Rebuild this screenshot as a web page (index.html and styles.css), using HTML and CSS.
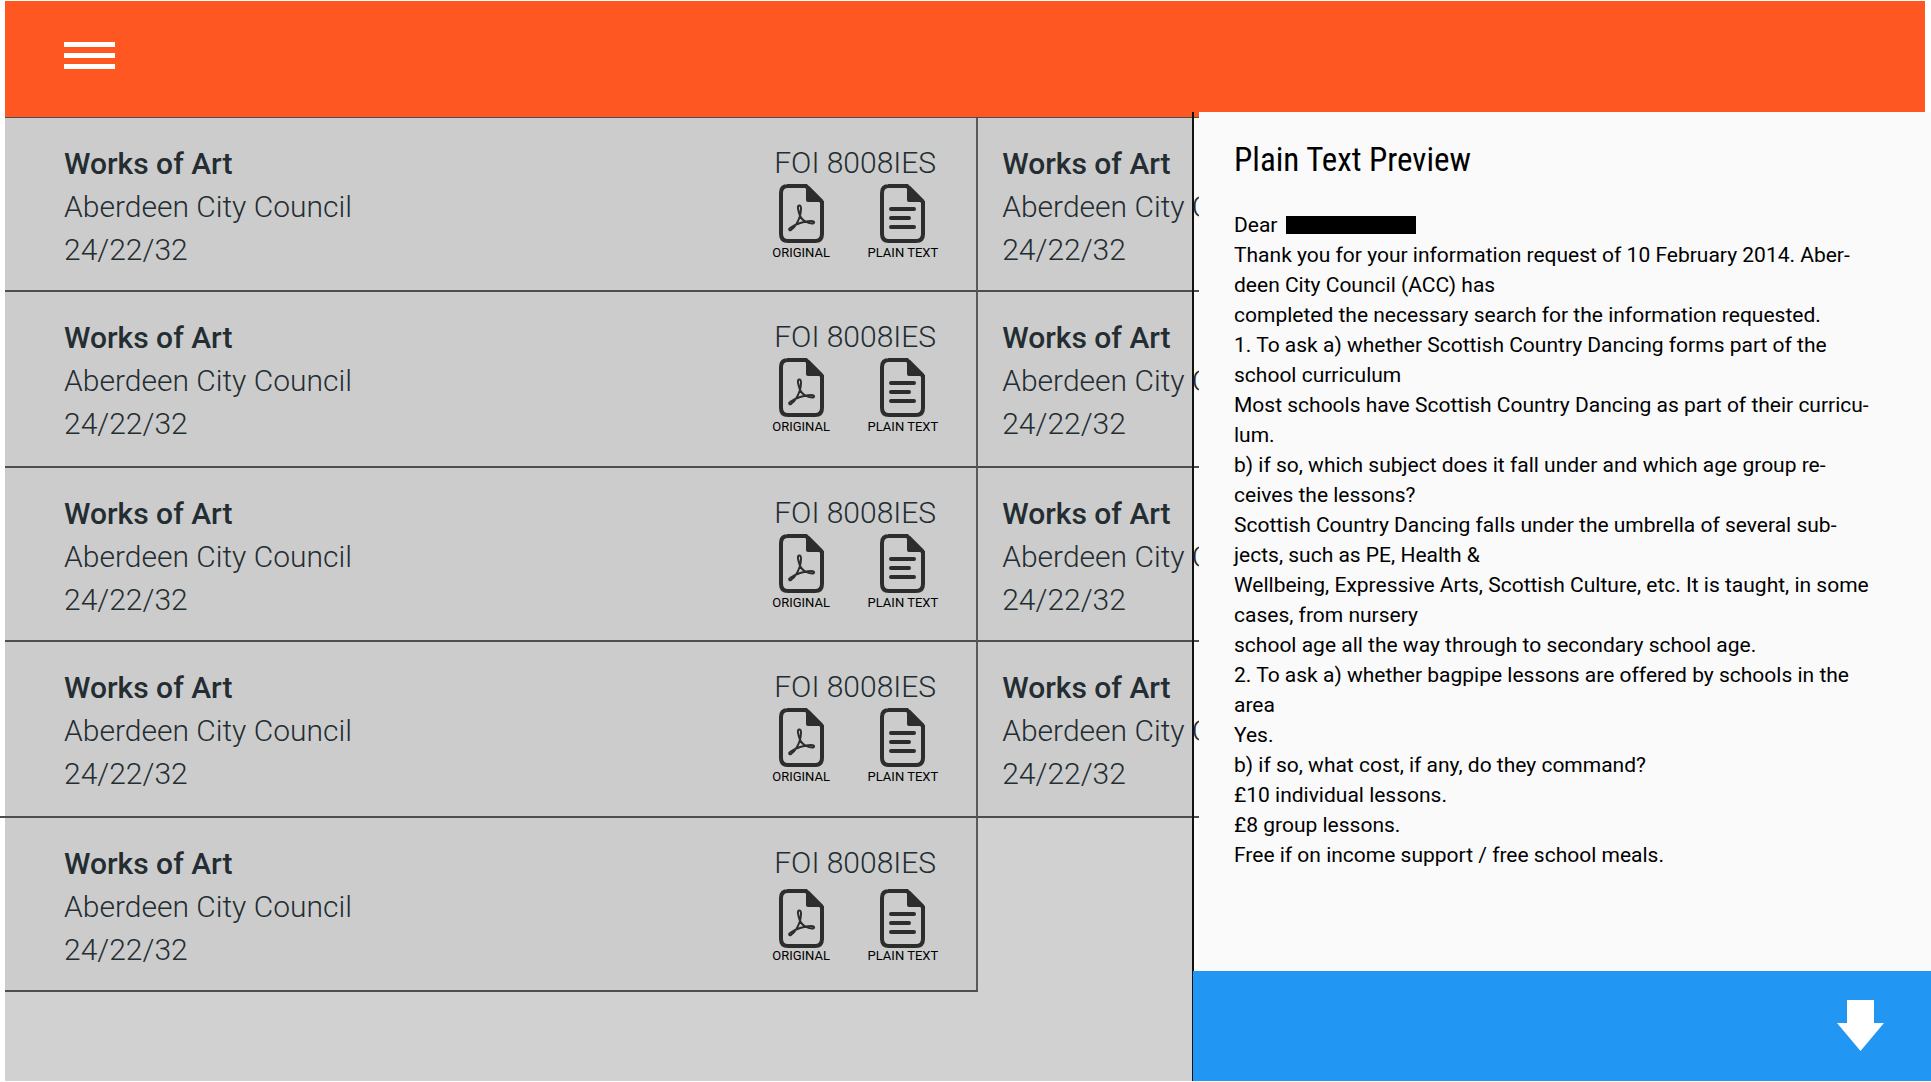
FILE: index.html
```
<!DOCTYPE html>
<html lang="en">
<head>
<meta charset="utf-8">
<title>Plain Text Preview</title>
<link rel="stylesheet" href="styles.css">
</head>
<body>
<svg class="sprite" aria-hidden="true">
  <symbol id="page" viewBox="0 0 45 59">
    <path d="M8 2H27L43 18V50Q43 57 36 57H9Q2 57 2 50V9Q2 2 9 2Z" fill="none" stroke="currentColor" stroke-width="4"/>
    <path d="M27 2H30L44 16V18H29Q27 18 27 16Z" fill="currentColor"/>
  </symbol>
  <symbol id="pdf" viewBox="0 0 45 59">
    <use href="#page"/>
    <path d="M21 32C19 26 18 22 20 21.500C23 21 22 27 21 32C19 38 15 44 12 46C10 47 9.500 45 11 44C16 40 26 37 32 37C36 37 36 39.500 33 39.500C28 39.500 23 36 21 32Z" fill="none" stroke="currentColor" stroke-width="2"/>
  </symbol>
  <symbol id="text" viewBox="0 0 45 59">
    <use href="#page"/>
    <path d="M11 25H34M11 34H29M11 43H34" fill="none" stroke="currentColor" stroke-width="4" stroke-linecap="round"/>
  </symbol>
</svg>
<div class="app">
  <header class="topbar">
    <button class="menu" type="button" aria-label="Menu"><span></span><span></span><span></span></button>
  </header>
  <main class="catalogue">
    <article class="record">
      <div class="info"><h2>Works of Art</h2><p>Aberdeen City Council</p><p>24/22/32</p></div>
      <div class="meta"><p class="ref">FOI 8008IES</p><div class="files">
        <a href="#original"><svg><use href="#pdf"/></svg>ORIGINAL</a>
        <a href="#plain"><svg><use href="#text"/></svg>PLAIN TEXT</a></div></div>
    </article>
    <article class="record"><div class="info"><h2>Works of Art</h2><p>Aberdeen City Council</p><p>24/22/32</p></div></article>
    <article class="record">
      <div class="info"><h2>Works of Art</h2><p>Aberdeen City Council</p><p>24/22/32</p></div>
      <div class="meta"><p class="ref">FOI 8008IES</p><div class="files">
        <a href="#original"><svg><use href="#pdf"/></svg>ORIGINAL</a>
        <a href="#plain"><svg><use href="#text"/></svg>PLAIN TEXT</a></div></div>
    </article>
    <article class="record"><div class="info"><h2>Works of Art</h2><p>Aberdeen City Council</p><p>24/22/32</p></div></article>
    <article class="record">
      <div class="info"><h2>Works of Art</h2><p>Aberdeen City Council</p><p>24/22/32</p></div>
      <div class="meta"><p class="ref">FOI 8008IES</p><div class="files">
        <a href="#original"><svg><use href="#pdf"/></svg>ORIGINAL</a>
        <a href="#plain"><svg><use href="#text"/></svg>PLAIN TEXT</a></div></div>
    </article>
    <article class="record"><div class="info"><h2>Works of Art</h2><p>Aberdeen City Council</p><p>24/22/32</p></div></article>
    <article class="record bleed">
      <div class="info"><h2>Works of Art</h2><p>Aberdeen City Council</p><p>24/22/32</p></div>
      <div class="meta"><p class="ref">FOI 8008IES</p><div class="files">
        <a href="#original"><svg><use href="#pdf"/></svg>ORIGINAL</a>
        <a href="#plain"><svg><use href="#text"/></svg>PLAIN TEXT</a></div></div>
    </article>
    <article class="record"><div class="info"><h2>Works of Art</h2><p>Aberdeen City Council</p><p>24/22/32</p></div></article>
    <article class="record last">
      <div class="info"><h2>Works of Art</h2><p>Aberdeen City Council</p><p>24/22/32</p></div>
      <div class="meta"><p class="ref">FOI 8008IES</p><div class="files">
        <a href="#original"><svg><use href="#pdf"/></svg>ORIGINAL</a>
        <a href="#plain"><svg><use href="#text"/></svg>PLAIN TEXT</a></div></div>
    </article>
  </main>
  <div class="scrim"></div>
  <aside class="drawer">
    <section class="preview">
      <h1>Plain Text Preview</h1>
      <p>Dear <span class="redacted"></span></p>
      <p>Thank you for your information request of 10 February 2014. Aber-<br>deen City Council (ACC) has</p>
      <p>completed the necessary search for the information requested.</p>
      <p>1. To ask a) whether Scottish Country Dancing forms part of the<br>school curriculum</p>
      <p>Most schools have Scottish Country Dancing as part of their curricu-<br>lum.</p>
      <p>b) if so, which subject does it fall under and which age group re-<br>ceives the lessons?</p>
      <p>Scottish Country Dancing falls under the umbrella of several sub-<br>jects, such as PE, Health &amp;</p>
      <p>Wellbeing, Expressive Arts, Scottish Culture, etc. It is taught, in some<br>cases, from nursery</p>
      <p>school age all the way through to secondary school age.</p>
      <p>2. To ask a) whether bagpipe lessons are offered by schools in the<br>area</p>
      <p>Yes.</p>
      <p>b) if so, what cost, if any, do they command?</p>
      <p>£10 individual lessons.</p>
      <p>£8 group lessons.</p>
      <p>Free if on income support / free school meals.</p>
    </section>
    <footer class="actions">
      <button class="download" type="button" aria-label="Download">
        <svg width="47" height="51" viewBox="0 0 47 51"><path d="M10 0H37V23H47L23.500 51L0 23H10Z" fill="#fff"/></svg>
      </button>
    </footer>
  </aside>
</div>
</body>
</html>
```
FILE: styles.css
```
* { box-sizing: border-box; }
body { margin: 0; background: #fff; font-family: Roboto, "Liberation Sans", sans-serif; }
h1, h2, p { margin: 0; }
button { border: 0; padding: 0; background: none; cursor: pointer; }
.sprite { position: absolute; width: 0; height: 0; }

.app {
  --drawer: 38.27%;
  position: relative;
  isolation: isolate;
  display: flex;
  flex-direction: column;
  min-height: 100vh;
  padding: 1px 6px 1px 5px;
  overflow: hidden;
}

.topbar { padding: 41px 59px 48px; background: #ff5722; border-bottom: 1px solid #4d4d4d; }
.menu { display: flex; flex-direction: column; gap: 6px; width: 51px; }
.menu span { height: 5px; background: #fff; }

.catalogue {
  flex: 1;
  display: grid;
  grid-template-columns: minmax(0, 973fr) minmax(0, 221fr);
  grid-auto-rows: 174px 176px;
  width: 62.2%;
  color: #232d32;
}
.record {
  position: relative;
  display: flex;
  justify-content: space-between;
  padding: 24px 38px 0 59px;
  border-bottom: 2px solid #4d4d4d;
  background: rgba(0, 0, 0, .02);
}
.record:nth-child(odd) { border-right: 2px solid #5a5a5a; }
.record:nth-child(even) { padding: 24px 0 0 24px; }
.record:nth-child(even) .info { min-width: 0; overflow: hidden; }
.bleed::before { content: ""; position: absolute; left: -5px; bottom: -2px; width: 5px; height: 2px; background: #4d4d4d; }
.info { font-size: 30px; line-height: 43px; font-weight: 300; white-space: nowrap; }
.info h2 { font-size: 30px; font-weight: 500; }
.meta { width: 166px; }
.ref { font-size: 30px; line-height: 42px; font-weight: 300; text-align: center; }
.files { display: flex; justify-content: space-between; }
.files a {
  display: flex;
  flex-direction: column;
  align-items: center;
  gap: 2px;
  color: #000;
  font-size: 13px;
  line-height: 16px;
  text-decoration: none;
}
.files svg { width: 45px; height: 59px; color: #2d2d2d; }
.last .files { padding-top: 5px; }
.last .files a { gap: 0; }

/* Dims the catalogue while the drawer is open */
.scrim {
  position: absolute;
  z-index: -1;
  top: 118px;
  right: calc(var(--drawer) - 1px);
  bottom: 1px;
  left: 5px;
  background: #d1d1d1;
}

.drawer {
  position: absolute;
  top: 112px;
  right: 0;
  bottom: 1px;
  width: var(--drawer);
  display: flex;
  flex-direction: column;
  border-left: 2px solid #111;
}
.preview {
  flex: 1;
  margin-left: 5px;
  padding: 24px 35px;
  background: #fafafa;
  color: #000;
  font-size: 21px;
  line-height: 30px;
}
.preview h1 {
  margin-bottom: 26px;
  font-family: "Roboto Condensed", "Liberation Sans Narrow", Roboto, sans-serif;
  font-size: 33px;
  line-height: 48px;
  font-weight: 400;
}
.redacted { display: inline-block; width: 130px; height: 18px; margin-left: 3px; background: #000; vertical-align: -2px; }
.actions { display: flex; justify-content: flex-end; margin-left: -1px; padding: 29px 47px 30px; background: #2196f3; }
.download svg { display: block; }
```
